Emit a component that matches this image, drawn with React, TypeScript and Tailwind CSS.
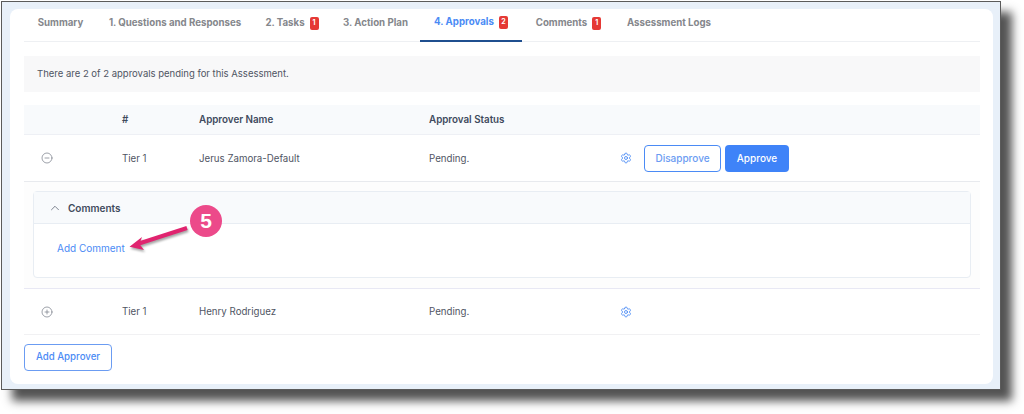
import { ChevronUp, CircleMinus, CirclePlus, Settings } from 'lucide-react';

const TABS = [
  { label: 'Summary', width: 73 },
  { label: '1. Questions and Responses', width: 156 },
  { label: '2. Tasks', count: 1, width: 78 },
  { label: '3. Action Plan', width: 89 },
  { label: '4. Approvals', count: 2, active: true, width: 102 },
  { label: 'Comments', count: 1, width: 93 },
  { label: 'Assessment Logs', width: 108 },
];

const ROW = 'grid grid-cols-[98px_77px_230px_191px_1fr] items-center';

function Badge({ count }: { count: number }) {
  return (
    <span className="flex h-[13px] w-[9px] items-center justify-center rounded-[2px] bg-[#e53935] text-[7px] font-bold text-white">
      {count}
    </span>
  );
}

export default function App() {
  return (
    <div className="h-[414px] w-[1024px] overflow-hidden bg-white font-['Inter',sans-serif]">
      <div className="relative ml-px mt-px h-[389px] w-[1000px] border border-[#5b5b5b] bg-[#e8f0f9] pl-[8px] pr-[6px] pt-[7px] shadow-[11px_11px_9px_rgba(0,0,0,0.68)]">
        <div className="h-[375px] w-[983px] rounded-lg bg-white pl-[14px] pr-[13px]">
          {/* tabs */}
          <div className="flex h-[33px] border-b border-[#eef0f3]">
            {TABS.map(tab => (
              <div
                key={tab.label}
                style={{ width: tab.width }}
                className={`-mb-px flex h-[33px] items-center justify-center gap-[5px] whitespace-nowrap pb-1 text-[9.7px] font-bold ${
                  tab.active ? 'border-b-2 border-[#1f4f8f] text-[#4b8bf5]' : 'text-[#85878c]'
                }`}
              >
                {tab.label}
                {tab.count && <Badge count={tab.count} />}
              </div>
            ))}
          </div>

          <div className="mt-[14px] flex h-[36px] items-center bg-[#f8f8f9] pl-[13px] text-[9.5px] text-[#4f5563]">
            There are 2 of 2 approvals pending for this Assessment.
          </div>

          {/* approvals table */}
          <div className={`${ROW} mt-[13px] h-[30px] border-b border-[#eef0f5] bg-[#f8fafc] pt-[2px] text-[9.8px] font-semibold text-[#3f4a5c]`}>
            <div />
            <div>#</div>
            <div>Approver Name</div>
            <div>Approval Status</div>
          </div>

          <div className={`${ROW} h-[47px] border-b border-[#e8eaee] text-[9.7px] text-[#4f5563]`}>
            <div className="pl-[17px]">
              <CircleMinus className="h-3 w-3 text-[#7c828c]" strokeWidth={1.5} />
            </div>
            <div className="pt-[2px]">Tier 1</div>
            <div className="pt-[2px]">Jerus Zamora-Default</div>
            <div className="pt-[2px]">Pending.</div>
            <div className="flex items-center">
              <Settings className="h-3 w-3 text-[#4b8bf5]" strokeWidth={1.75} />
              <button type="button" className="ml-3 h-[27px] w-[77px] rounded-[4px] border border-[#4b8bf5] text-[10px] font-medium text-[#6b9cf2]">
                Disapprove
              </button>
              <button type="button" className="ml-[4px] h-[27px] w-[64px] rounded-[4px] bg-[#3f83f8] text-[10px] font-medium text-white">
                Approve
              </button>
            </div>
          </div>

          <div className="h-[107px] border-b border-[#e8e8f4] bg-[#fdfdfd] px-[9px] pt-[9px]">
            <div className="h-[87px] rounded-[4px] border border-[#e8edf3] bg-white">
              <div className="flex h-[32px] items-center border-b border-[#e8edf3] bg-[#f8fafc] pl-[14px] text-[10px] font-semibold text-[#3f4a5c]">
                <ChevronUp className="h-[14px] w-[14px] text-[#6b7280]" strokeWidth={1.5} />
                <span className="ml-[6px] pt-[2px]">Comments</span>
              </div>
              <div className="pl-[23px] pt-[17px] text-[10px] text-[#4b8bf5]">Add Comment</div>
            </div>
          </div>

          <div className={`${ROW} h-[46px] border-b border-[#f1f1f3] text-[9.7px] text-[#4f5563]`}>
            <div className="pl-[17px]">
              <CirclePlus className="h-3 w-3 text-[#7c828c]" strokeWidth={1.5} />
            </div>
            <div className="pt-[2px]">Tier 1</div>
            <div className="pt-[2px]">Henry Rodriguez</div>
            <div className="pt-[2px]">Pending.</div>
            <div>
              <Settings className="h-3 w-3 text-[#4b8bf5]" strokeWidth={1.75} />
            </div>
          </div>

          <button type="button" className="mt-[9px] h-[27px] w-[88px] rounded-[4px] border border-[#6b9cf2] text-[9.7px] font-medium text-[#4b8bf5]">
            Add Approver
          </button>
        </div>

        {/* callout */}
        <svg className="absolute left-[125px] top-[220px] h-[36px] w-[70px] drop-shadow-[1px_2px_1px_rgba(0,0,0,0.35)]" viewBox="0 0 70 36">
          <path d="M60 6 L12 21.5" stroke="#e0246f" strokeWidth="4" />
          <path d="M2.5 24.7 L15 15 L12.5 22 L17 28 Z" fill="#e0246f" />
        </svg>
        <div className="absolute left-[188px] top-[203px] flex h-8 w-8 items-center justify-center rounded-full bg-[#ec4a8a] font-['Liberation_Sans',sans-serif] text-[21px] font-bold text-white">
          5
        </div>
      </div>
    </div>
  );
}
